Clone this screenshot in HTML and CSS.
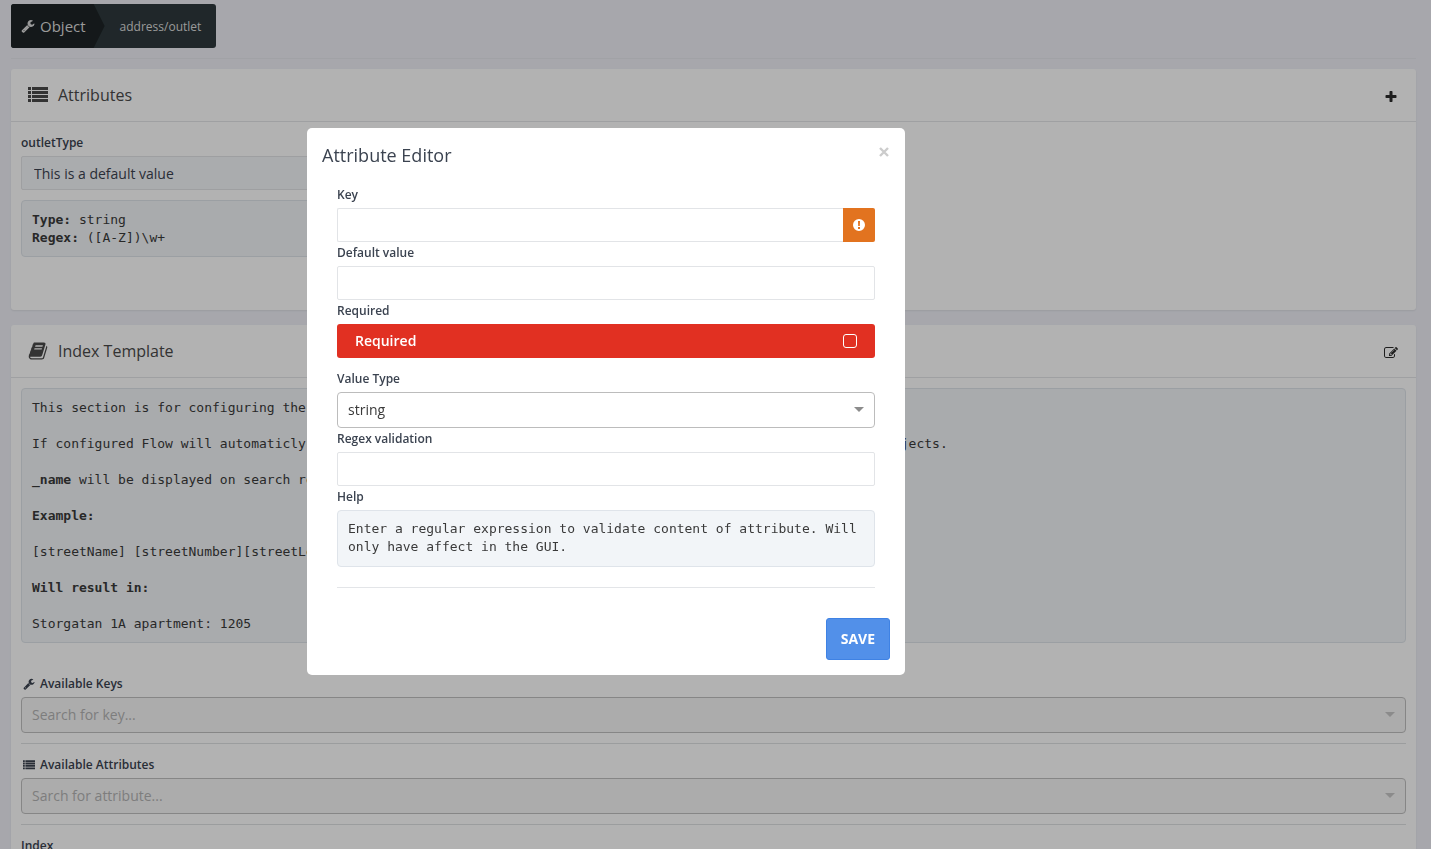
FILE: index.html
```html
<!DOCTYPE html>
<html lang="en">
<head>
<meta charset="utf-8">
<title>Object - address/outlet</title>
<link rel="stylesheet" href="styles.css">
</head>
<body>
<svg class="sprite" aria-hidden="true">
  <symbol id="wrench" viewBox="0 0 1792 1792"><path d="M448 1472q0-26-19-45t-45-19-45 19-19 45 19 45 45 19 45-19 19-45zm644-420l-682 682q-37 37-90 37-52 0-91-37l-106-108q-38-36-38-90 0-53 38-91l681-681q39 98 114.500 173.500t173.500 114.500zm634-435q0 39-23 106-47 134-164.500 217.500t-258.500 83.500q-185 0-316.500-131.500t-131.500-316.500 131.500-316.500 316.500-131.500q58 0 121.500 16.500t107.500 46.500q16 11 16 28t-16 28l-293 169v224l193 107q5-3 79-48.500t135.500-81 70.500-35.500q15 0 23.500 10t8.500 25z"/></symbol>
  <symbol id="list" viewBox="0 0 20 16"><path d="M0 0h3v3H0zM4 0h16v3H4zM0 4h3v3H0zM4 4h16v3H4zM0 8h3v3H0zM4 8h16v3H4zM0 12h3v3H0zM4 12h16v3H4z"/></symbol>
  <symbol id="book" viewBox="0 0 1792 1792"><path d="M1703 478q40 57 18 129l-275 906q-19 64-76.500 107.500t-122.500 43.500h-923q-77 0-148.500-53.500t-99.500-131.500q-24-67-2-127 0-4 3-27t4-37q1-8-3-21.500t-3-19.500q2-11 8-21t16.500-23.500 16.500-23.500q23-38 45-91.500t30-91.500q3-10 .5-30t-.5-28q3-11 17-28t17-23q21-36 42-92t25-90q1-9-2.500-32t.5-28q4-13 22-30.500t22-22.500q19-26 42.500-84.500t27.500-96.500q1-8-3-25.500t-2-26.500q2-8 9-18t18-23 17-21q8-12 16.500-30.500t15-35 16-36 19.500-32 26.500-23.500 36-11.500 47.500 5.500l-1 3q38-9 51-9h761q74 0 114 56t18 130l-274 906q-36 119-71.500 153.500t-128.500 34.500h-869q-27 0-38 15-11 16-1 43 24 70 144 70h923q29 0 56-15.500t35-41.500l300-987q7-22 5-57 38 15 59 43zm-1064 2q-4 13 2 22.500t20 9.500h608q13 0 25.500-9.500t16.500-22.500l21-64q4-13-2-22.500t-20-9.500h-608q-13 0-25.500 9.500t-16.500 22.500zm-83 256q-4 13 2 22.500t20 9.500h608q13 0 25.500-9.500t16.500-22.500l21-64q4-13-2-22.500t-20-9.500h-608q-13 0-25.500 9.500t-16.500 22.500z"/></symbol>
  <symbol id="edit" viewBox="0 0 1792 1792"><path d="M888 1184l116-116-152-152-116 116v56h96v96h56zm440-720q-16-16-33 1l-350 350q-17 17-1 33t33-1l350-350q17-17 1-33zm80 594v190q0 119-84.500 203.500t-203.500 84.500h-832q-119 0-203.500-84.500t-84.500-203.500v-832q0-119 84.500-203.500t203.500-84.500h832q63 0 117 25 15 7 18 23 3 17-9 29l-49 49q-14 14-32 8-23-6-45-6h-832q-66 0-113 47t-47 113v832q0 66 47 113t113 47h832q66 0 113-47t47-113v-126q0-13 9-22l64-64q15-15 35-7t20 29zm-96-738l288 288-672 672h-288v-288zm444 132l-92 92-288-288 92-92q28-28 68-28t68 28l152 152q28 28 28 68t-28 68z"/></symbol>
  <symbol id="plus" viewBox="0 0 1792 1792"><path d="M1600 736v192q0 40-28 68t-68 28h-416v416q0 40-28 68t-68 28h-192q-40 0-68-28t-28-68v-416h-416q-40 0-68-28t-28-68v-192q0-40 28-68t68-28h416v-416q0-40 28-68t68-28h192q40 0 68 28t28 68v416h416q40 0 68 28t28 68z"/></symbol>
  <symbol id="alert" viewBox="0 0 12 12"><path fill-rule="evenodd" d="M6 0a6 6 0 1 0 0 12A6 6 0 0 0 6 0zM5 2h2l-.2 5H5.200zM5 8h2v2H5z"/></symbol>
  <symbol id="close" viewBox="0 0 10 10"><path d="M1 1l8 8M9 1l-8 8" fill="none" stroke="currentColor" stroke-width="2.400"/></symbol>
</svg>

<main class="page">
  <nav class="crumbs" aria-label="Breadcrumb">
    <a class="crumb crumb-root" href="#"><svg class="icon icon-md"><use href="#wrench"/></svg>Object</a>
    <a class="crumb crumb-leaf" href="#">address/outlet</a>
  </nav>
  <hr class="page-rule">

  <section class="panel">
    <header class="panel-head">
      <svg class="icon icon-list"><use href="#list"/></svg>
      <h2 class="panel-title">Attributes</h2>
      <button class="icon-btn" type="button" aria-label="Add attribute"><svg class="icon icon-md"><use href="#plus"/></svg></button>
    </header>
    <div class="panel-body attribute-grid">
      <div class="attribute">
        <label class="label" for="outlet">outletType</label>
        <input class="input input-muted" id="outlet" type="text" value="This is a default value" readonly>
        <pre class="note note-gap"><b>Type:</b> string
<b>Regex:</b> ([A-Z])\w+</pre>
      </div>
    </div>
  </section>

  <section class="panel">
    <header class="panel-head">
      <svg class="icon icon-lg"><use href="#book"/></svg>
      <h2 class="panel-title">Index Template</h2>
      <button class="icon-btn" type="button" aria-label="Edit template"><svg class="icon icon-md"><use href="#edit"/></svg></button>
    </header>
    <div class="panel-body">
      <pre class="note note-intro">This section is for configuring the index.

If configured Flow will automaticly create the index values from this template when saving any of the stored objects.

<b>_name</b> will be displayed on search results.

<b>Example:</b>

[streetName] [streetNumber][streetLetter]

<b>Will result in:</b>

Storgatan 1A apartment: 1205</pre>
      <label class="label label-icon" for="keys"><svg class="icon icon-sm"><use href="#wrench"/></svg>Available Keys</label>
      <div class="select-wrap select-wrap-empty"><select class="select" id="keys"><option>Search for key...</option></select></div>
      <hr class="rule">
      <label class="label label-icon" for="attrs"><svg class="icon icon-sm icon-sm-list"><use href="#list"/></svg>Available Attributes</label>
      <div class="select-wrap select-wrap-empty"><select class="select" id="attrs"><option>Sarch for attribute...</option></select></div>
      <hr class="rule">
      <label class="label" for="index">Index</label>
      <input class="input" id="index" type="text">
    </div>
  </section>
</main>

<div class="overlay">
  <form class="modal" role="dialog" aria-labelledby="modal-title">
    <header class="modal-head">
      <h1 class="modal-title" id="modal-title">Attribute Editor</h1>
      <button class="close" type="button" aria-label="Close"><svg class="icon icon-close"><use href="#close"/></svg></button>
    </header>
    <div class="modal-body">
      <label class="label" for="key">Key</label>
      <div class="input-group">
        <input class="input" id="key" type="text">
        <span class="addon"><svg class="icon icon-alert"><use href="#alert"/></svg></span>
      </div>
      <label class="label" for="default">Default value</label>
      <input class="input" id="default" type="text">
      <span class="label">Required</span>
      <label class="toggle">Required<input class="check" type="checkbox"></label>
      <label class="label" for="type">Value Type</label>
      <div class="select-wrap"><select class="select" id="type"><option>string</option></select></div>
      <label class="label" for="regex">Regex validation</label>
      <input class="input" id="regex" type="text">
      <span class="label">Help</span>
      <pre class="note">Enter a regular expression to validate content of attribute. Will only have affect in the GUI.</pre>
      <hr class="modal-rule">
    </div>
    <footer class="modal-foot"><button class="save" type="button">SAVE</button></footer>
  </form>
</div>
</body>
</html>
```
FILE: styles.css
```css
* { box-sizing: border-box; }
body {
  margin: 0;
  height: 100vh;
  overflow: hidden;
  background: #eff0f7;
  color: #3b4350;
  font: 14px/20px "Open Sans", sans-serif;
}
h1, h2 { margin: 0; font-weight: 400; }
hr { height: 1px; margin: 10px 0; border: 0; background: #dfe1e3; }
button { padding: 0; border: 0; background: none; font: inherit; cursor: pointer; }

.sprite { display: none; }
.icon { flex: none; fill: currentColor; }
.icon-sm { width: 12px; height: 12px; }
.icon-sm-list { height: 10px; }
.icon-md { width: 14px; height: 14px; }
.icon-lg { width: 20px; height: 20px; }
.icon-list { width: 20px; height: 16px; }
.icon-alert { width: 12px; height: 12px; }
.icon-close { width: 10px; height: 10px; }

.page { padding: 4px 15px 0 11px; }

.crumbs {
  display: inline-flex;
  height: 44px;
  border-radius: 3px;
  overflow: hidden;
  background: #2e393d;
  vertical-align: top;
}
.crumb { display: flex; align-items: center; color: #dcdcdc; text-decoration: none; }
.crumb-root {
  gap: 5px;
  padding: 0 19px 0 10px;
  background: #1d2326;
  clip-path: polygon(0 0, calc(100% - 11px) 0, 100% 50%, calc(100% - 11px) 100%, 0 100%);
  font-size: 15px;
}
.crumb-leaf { padding: 2px 15px 0; font-size: 12px; }
.page-rule { margin: 10px 0; background: #e7e9ee; }

.panel {
  margin-bottom: 15px;
  border-radius: 3px;
  background: #fff;
  box-shadow: 0 1px 2px rgba(0, 0, 0, .08);
}
.panel-head {
  display: flex;
  align-items: center;
  gap: 10px;
  height: 53px;
  padding: 0 18px 0 17px;
  border-bottom: 1px solid #e4e6e8;
  color: #4a4a4a;
}
.panel-title { flex: 1; font-size: 16px; }
.icon-btn { display: flex; padding-top: 4px; color: #2b2b2b; }
.panel-body { padding: 10px; }
.attribute-grid {
  display: grid;
  grid-template-columns: 1fr 1fr;
  gap: 20px;
  padding-bottom: 53px;
}

.label {
  display: flex;
  align-items: center;
  gap: 5px;
  height: 22px;
  margin-bottom: 2px;
  font-size: 12px;
  font-weight: 600;
}
.label-icon { padding-left: 2px; }
.input {
  display: block;
  width: 100%;
  height: 34px;
  padding: 0 12px;
  border: 1px solid #e2e4e7;
  border-radius: 2px;
  background: #fff;
  color: inherit;
  font: inherit;
}
.input-muted { background: #f4f6f9; }
.note {
  margin: 0;
  padding: 9px 10px 10px;
  border: 1px solid #dfe4ea;
  border-radius: 4px;
  background: #f2f5f8;
  color: #3a3a3a;
  font: 13px/18px "DejaVu Sans Mono", monospace;
  white-space: pre-wrap;
}
.note-gap { margin-top: 10px; padding: 10px 10px 9px; }
.note-intro { margin-bottom: 30px; padding: 10px 10px 9px; }

.select-wrap { position: relative; }
.select-wrap::after {
  content: "";
  position: absolute;
  top: 15px;
  right: 11px;
  border: 5px solid transparent;
  border-top-color: #8c8c8c;
  border-bottom: 0;
  pointer-events: none;
}
.select {
  display: block;
  width: 100%;
  height: 36px;
  padding: 0 10px;
  border: 1px solid #bcbcbc;
  border-radius: 4px;
  appearance: none;
  background: #fff;
  color: #3a3a3a;
  font: inherit;
}
.select-wrap-empty::after { border-top-color: #c8c8c8; }
.select-wrap-empty .select { background: #f7f7f7; border-color: #c0c0c0; color: #b4b4b4; }

.overlay {
  position: fixed;
  inset: 0;
  padding: 128px 219px 0 0;
  background: rgba(0, 0, 0, .3);
}
.modal {
  max-width: 598px;
  margin: 0 auto;
  border-radius: 5px;
  background: #fff;
}
.modal-head {
  display: flex;
  align-items: flex-start;
  justify-content: space-between;
  height: 56px;
  padding: 15px 16px 0 15px;
}
.modal-title { font-size: 18px; line-height: 24px; }
.close { display: flex; padding-top: 4px; color: #ccc; }
.modal-body { padding: 0 30px; }
.input-group { display: flex; }
.input-group .input { flex: 1; border-right: 0; border-radius: 2px 0 0 2px; }
.addon {
  display: flex;
  align-items: center;
  justify-content: center;
  width: 32px;
  border-radius: 0 2px 2px 0;
  background: #e2731f;
  color: #fff;
}
.toggle {
  display: flex;
  align-items: center;
  justify-content: space-between;
  height: 34px;
  margin-bottom: 10px;
  padding: 0 18px;
  border-radius: 3px;
  background: #e13022;
  color: #fff;
  font-weight: 600;
}
.check {
  width: 14px;
  height: 14px;
  margin: 0;
  border: 1px solid #fff;
  border-radius: 3px;
  appearance: none;
}
.modal-rule { margin: 20px 0 30px; background: #e3e5e8; }
.modal-foot { display: flex; justify-content: flex-end; padding: 0 15px 15px; }
.save {
  height: 42px;
  padding: 0 14px;
  border: 1px solid #3f82e4;
  border-radius: 3px;
  background: #5290e9;
  color: #fff;
  font-size: 14px;
  font-weight: 700;
}
```
